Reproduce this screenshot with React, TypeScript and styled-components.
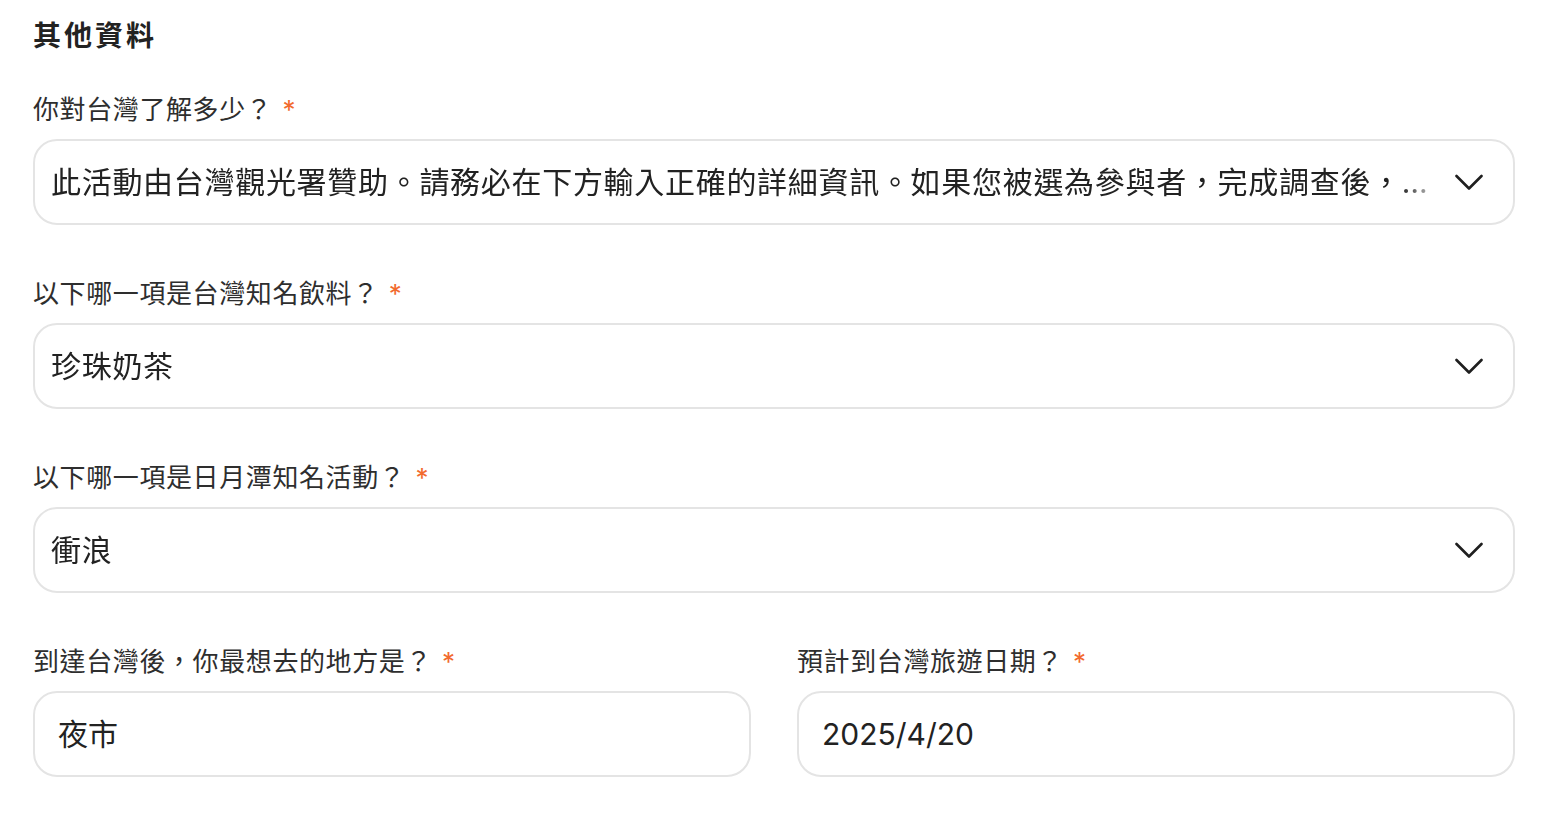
import React from "react";
import styled, { createGlobalStyle } from "styled-components";

const GlobalStyle = createGlobalStyle`
  html, body {
    margin: 0;
    padding: 0;
    background: #ffffff;
  }
  body {
    font-family: Inter, "Noto Sans CJK TC", "Noto Sans", sans-serif;
    color: #222222;
  }
`;

const Page = styled.div`
  box-sizing: border-box;
  width: 1564px;
  padding: 16px 49px 0 33px;
`;

const Heading = styled.h2`
  margin: 0 0 36px;
  font-size: 28px;
  line-height: 40px;
  font-weight: 700;
  letter-spacing: 3px;
  color: #222222;
`;

const Form = styled.div`
  display: flex;
  flex-direction: column;
  gap: 51px;
`;

const Row = styled.div`
  display: grid;
  grid-template-columns: 1fr 1fr;
  column-gap: 46px;
`;

const Field = styled.div`
  display: flex;
  flex-direction: column;
  gap: 11px;
  min-width: 0;
`;

const Label = styled.label`
  font-size: 26px;
  line-height: 36px;
  letter-spacing: 0.6px;
  color: #2e2e2e;
  white-space: nowrap;
`;

const Required = styled.span`
  color: #f26a2e;
  margin-left: 10px;
`;

const Box = styled.div<{ $pad: number }>`
  box-sizing: border-box;
  height: 86px;
  border: 2px solid #e4e4e4;
  border-radius: 24px;
  background: #ffffff;
  display: flex;
  align-items: center;
  gap: 24px;
  padding: 0 30px 0 ${(p) => p.$pad}px;
  min-width: 0;
`;

const Value = styled.span<{ $spacing: number; $fade?: boolean }>`
  flex: 1;
  min-width: 0;
  font-size: 30px;
  line-height: 40px;
  letter-spacing: ${(p) => p.$spacing}px;
  color: #222222;
  white-space: nowrap;
  overflow: hidden;
  text-overflow: ellipsis;
  ${(p) =>
    p.$fade
      ? `-webkit-mask-image: linear-gradient(to right, #000 calc(100% - 30px), rgba(0,0,0,0.3));
         mask-image: linear-gradient(to right, #000 calc(100% - 30px), rgba(0,0,0,0.3));`
      : ""}
`;

const Chevron = () => (
  <svg width="28" height="18" viewBox="0 0 28 18" fill="none">
    <polyline
      points="1.5,3 14,15.5 26.5,3"
      stroke="#1f1f1f"
      strokeWidth="2.6"
      strokeLinecap="round"
      strokeLinejoin="round"
    />
  </svg>
);

const SelectField = ({ label, value }: { label: string; value: string }) => (
  <Field>
    <Label>
      {label}
      <Required>*</Required>
    </Label>
    <Box $pad={16}>
      <Value $spacing={0.7} $fade>
        {value}
      </Value>
      <Chevron />
    </Box>
  </Field>
);

const InputField = ({ label, value }: { label: string; value: string }) => (
  <Field>
    <Label>
      {label}
      <Required>*</Required>
    </Label>
    <Box $pad={23}>
      <Value $spacing={0}>{value}</Value>
    </Box>
  </Field>
);

export default function App() {
  return (
    <>
      <GlobalStyle />
      <Page>
        <Heading>其他資料</Heading>
        <Form>
          <SelectField
            label="你對台灣了解多少？"
            value="此活動由台灣觀光署贊助。請務必在下方輸入正確的詳細資訊。如果您被選為參與者，完成調查後，您將會收到一份精美的禮品。"
          />
          <SelectField label="以下哪一項是台灣知名飲料？" value="珍珠奶茶" />
          <SelectField label="以下哪一項是日月潭知名活動？" value="衝浪" />
          <Row>
            <InputField label="到達台灣後，你最想去的地方是？" value="夜市" />
            <InputField label="預計到台灣旅遊日期？" value="2025/4/20" />
          </Row>
        </Form>
      </Page>
    </>
  );
}
